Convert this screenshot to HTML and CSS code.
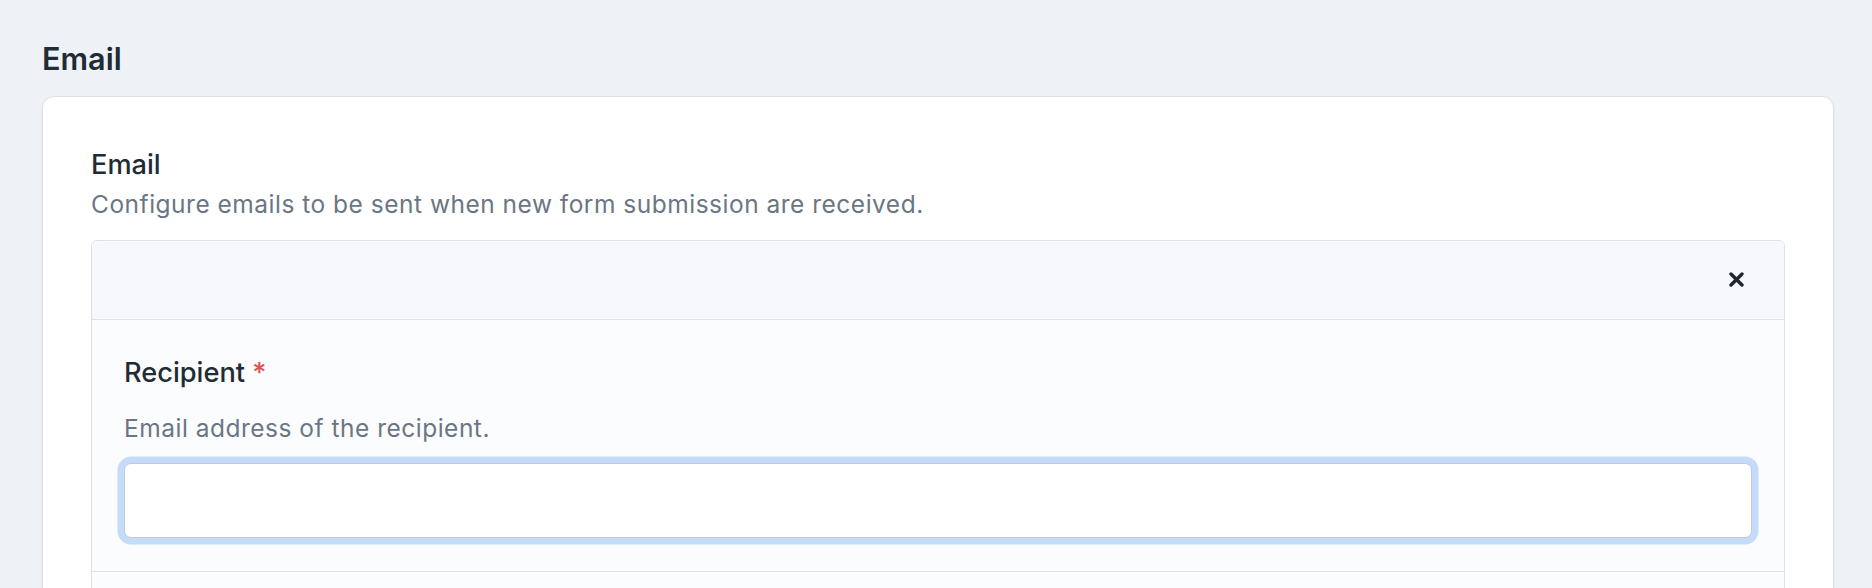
FILE: index.html
```html
<!DOCTYPE html>
<html lang="en">
<head>
<meta charset="utf-8">
<title>Email</title>
<link rel="stylesheet" href="styles.css">
</head>
<body>
<main class="page">
  <h2 class="page-title">Email</h2>
  <section class="card">
    <div class="field-head">
      <div class="field-label">Email</div>
      <div class="field-desc">Configure emails to be sent when new form submission are received.</div>
    </div>
    <div class="repeater">
      <div class="repeater-item">
        <div class="item-header">
          <button class="icon-btn" type="button" aria-label="Delete">
            <svg viewBox="0 0 15 15" width="15" height="15" aria-hidden="true">
              <path d="M2 2 L13 13 M13 2 L2 13" fill="none" stroke="currentColor" stroke-width="3.4" stroke-linecap="round"/>
            </svg>
          </button>
        </div>
        <div class="item-body">
          <label class="input-label" for="recipient">Recipient <span class="req">*</span></label>
          <div class="input-help">Email address of the recipient.</div>
          <input class="text-input" id="recipient" type="email">
        </div>
        <div class="item-footer"></div>
      </div>
    </div>
  </section>
</main>
</body>
</html>
```

FILE: styles.css
```css
* { box-sizing: border-box; }
html, body { margin: 0; padding: 0; }
body {
  background: #eef1f5;
  font-family: Inter, "Noto Sans", "Liberation Sans", sans-serif;
  color: #1f2b35;
  height: 588px;
  overflow: hidden;
}
.page {
  padding: 35px 38px 0 42px;
}
.page-title {
  margin: 0 0 13.5px 0;
  font-size: 30.6px;
  line-height: 47.6px;
  font-weight: 600;
  color: #1f2b35;
}
.card {
  background: #ffffff;
  border: 1px solid #dde1e6;
  border-radius: 12px;
  box-shadow: 0 1px 3px rgba(20, 30, 50, 0.06);
  padding: 47.5px 48px 48px 48px;
}
.field-head {
  display: flex;
  flex-direction: column;
  gap: 2px;
}
.field-label {
  font-size: 27.2px;
  line-height: 40.8px;
  font-weight: 500;
  color: #1f2b35;
}
.field-desc {
  font-size: 24.5px;
  letter-spacing: 0.5px;
  line-height: 34px;
  color: #6b7684;
}
.repeater {
  margin-top: 18.5px;
}
.repeater-item {
  border: 1px solid #dde2e7;
  border-radius: 6px;
  background: #fbfcfe;
  overflow: hidden;
}
.item-header {
  height: 79px;
  background: #f6f8fb;
  border-bottom: 1px solid #dde2e7;
  display: flex;
  align-items: center;
  justify-content: flex-end;
  padding: 0 40px;
}
.icon-btn {
  border: 0;
  background: transparent;
  padding: 0;
  width: 15px;
  height: 15px;
  display: flex;
  align-items: center;
  justify-content: center;
  color: #1c2731;
  cursor: pointer;
}
.icon-btn svg { display: block; width: 15px; height: 15px; }
.item-body {
  padding: 33.5px 32px 33px 32px;
  display: flex;
  flex-direction: column;
}
.input-label {
  font-size: 27.2px;
  line-height: 40.8px;
  font-weight: 500;
  color: #1f2b35;
}
.req {
  color: #d9534f;
  font-weight: 500;
}
.input-help {
  margin-top: 17px;
  font-size: 24.5px;
  letter-spacing: 0.5px;
  line-height: 34px;
  color: #6b7684;
}
.text-input {
  margin-top: 17.5px;
  height: 75px;
  width: 100%;
  border: 1.5px solid #c6cacf;
  border-radius: 7px;
  background: #ffffff;
  box-shadow: 0 0 0 6.5px #c4dcfa;
  font: inherit;
  outline: none;
}
.item-footer {
  border-top: 1px solid #dde2e7;
  height: 40px;
  background: #fbfcfe;
}
```
